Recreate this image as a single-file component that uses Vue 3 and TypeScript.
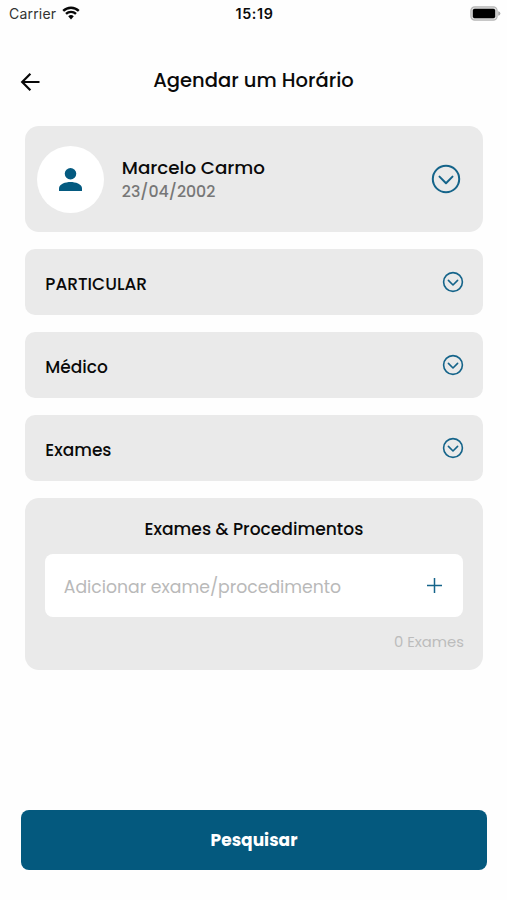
<script setup lang="ts">
interface Patient {
  name: string
  birthDate: string
}

interface SelectField {
  id: string
  label: string
}

const patient: Patient = { name: 'Marcelo Carmo', birthDate: '23/04/2002' }

const fields: SelectField[] = [
  { id: 'plan', label: 'PARTICULAR' },
  { id: 'doctor', label: 'Médico' },
  { id: 'exams', label: 'Exames' },
]

const exams: string[] = []
</script>

<template>
  <main class="screen">
    <div class="status">
      <div class="carrier">
        <span class="carrier-name">Carrier</span>
        <svg class="wifi" viewBox="0 0 18 14">
          <path d="M1.2 4.9a11.2 11.2 0 0 1 15.6 0M4 7.9a7.2 7.2 0 0 1 10 0" />
          <path class="wifi-dot" d="M6.2 10.3a4.1 4.1 0 0 1 5.6 0L9 13.4z" />
        </svg>
      </div>
      <span class="clock">15:19</span>
      <div class="power">
        <svg class="battery" viewBox="0 0 31 15">
          <rect class="battery-case" x="0.9" y="0.9" width="26.2" height="13.2" rx="3.8" />
          <rect x="2.8" y="2.8" width="22.4" height="9.4" rx="1.8" />
          <path class="battery-tip" d="M28.2 5.2q2.2.6 2.2 2.3t-2.2 2.3z" />
        </svg>
      </div>
    </div>

    <header class="header">
      <button class="back" type="button" aria-label="Voltar">
        <svg viewBox="0 0 20 20"><path d="M19.5 10H2.5M10.4 1.8 2.2 10l8.2 8.2" /></svg>
      </button>
      <h1 class="title">Agendar um Horário</h1>
    </header>

    <section class="content">
      <div class="card patient">
        <div class="avatar">
          <svg viewBox="0 0 24 24">
            <circle cx="12" cy="6" r="6" />
            <path d="M0 24v-3c0-4.3 7-6.4 12-6.4s12 2.1 12 6.4v3z" />
          </svg>
        </div>
        <div class="info">
          <span class="name">{{ patient.name }}</span>
          <span class="birth">{{ patient.birthDate }}</span>
        </div>
        <svg class="chevron chevron-large" viewBox="0 0 30 30">
          <circle cx="15" cy="15" r="13.2" />
          <path d="m8.5 12.6 6.5 6.7 6.5-6.7" />
        </svg>
      </div>

      <div v-for="field in fields" :key="field.id" class="card field">
        <span class="label">{{ field.label }}</span>
        <svg class="chevron" viewBox="0 0 22 22">
          <circle cx="11" cy="11" r="9.4" />
          <path d="m6.4 9.4 4.6 4.6 4.6-4.6" />
        </svg>
      </div>

      <div class="card exams">
        <h2 class="exams-title">Exames &amp; Procedimentos</h2>
        <div class="entry">
          <span class="placeholder">Adicionar exame/procedimento</span>
          <svg class="plus" viewBox="0 0 16 16"><path d="M8.5 1v15M1 8.5h15" /></svg>
        </div>
        <span class="count">{{ exams.length }} Exames</span>
      </div>
    </section>

    <button class="submit" type="button"><span class="submit-text">Pesquisar</span></button>
  </main>
</template>

<style>
body {
  background: #fff;
}
</style>

<style scoped>
.screen {
  box-sizing: border-box;
  height: 900px;
  display: flex;
  flex-direction: column;
  font-family: Poppins, Inter, sans-serif;
  font-weight: 500;
  color: #0a0a0a;
  background: #fefefe;
}
svg {
  display: block;
  flex: none;
}
button {
  border: 0;
  padding: 0;
  font: inherit;
}
.status {
  height: 28px;
  padding: 0 6px 0 8px;
  display: grid;
  grid-template-columns: 1fr auto 1fr;
  align-items: center;
  box-sizing: border-box;
  font-family: Inter, sans-serif;
  line-height: 28px;
}
.carrier {
  display: flex;
  align-items: center;
  gap: 6px;
}
.carrier-name {
  width: 48px;
  padding-left: 1px;
  box-sizing: border-box;
  font-size: 14px;
  font-weight: 400;
  letter-spacing: 0.2px;
  color: #333;
}
.wifi {
  width: 18px;
  height: 14px;
  margin-top: -3px;
  fill: none;
  stroke: #080808;
  stroke-width: 2.4;
}
.wifi .wifi-dot {
  fill: #080808;
  stroke: none;
}
.clock {
  font-size: 14.3px;
  font-weight: 600;
  letter-spacing: 0.6px;
}
.power {
  display: flex;
  justify-content: flex-end;
}
.battery {
  width: 31px;
  height: 15px;
  margin-top: -2px;
}
.battery-case {
  fill: #ddd;
  stroke: #b5b5b5;
  stroke-width: 1.2;
}
.battery-tip {
  fill: #aaa;
}
.header {
  height: 98px;
  padding: 9px 20px 0;
  display: grid;
  grid-template-columns: 20px 1fr 20px;
  align-items: center;
  box-sizing: border-box;
}
.back {
  width: 20px;
  height: 20px;
  background: none;
}
.back svg {
  width: 20px;
  height: 20px;
  fill: none;
  stroke: #080808;
  stroke-width: 2.2;
}
.title {
  margin: 0;
  padding-bottom: 2px;
  text-align: center;
  font-size: 19.5px;
  font-weight: 500;
  line-height: 28px;
  white-space: nowrap;
}
.content {
  padding: 0 24.5px 0 25.3px;
  display: flex;
  flex-direction: column;
  gap: 17.2px;
}
.card {
  box-sizing: border-box;
  background: #eaeaea;
  border-radius: 10px;
}
.patient {
  height: 106px;
  padding: 0 22px 0 12px;
  display: flex;
  align-items: center;
  border-radius: 14px;
}
.avatar {
  width: 67px;
  height: 67px;
  border-radius: 50%;
  background: #fff;
  display: flex;
  align-items: center;
  justify-content: center;
}
.avatar svg {
  width: 23px;
  height: 23px;
  fill: #045a80;
}
.info {
  flex: 1;
  margin-left: 17.5px;
  display: flex;
  flex-direction: column;
}
.name {
  font-size: 18.3px;
  line-height: 24px;
}
.birth {
  font-size: 15.8px;
  line-height: 23px;
  color: #777;
}
.chevron {
  width: 22px;
  height: 22px;
  fill: none;
  stroke: #15648a;
  stroke-width: 1.6;
  stroke-linecap: round;
  stroke-linejoin: round;
}
.chevron-large {
  width: 30px;
  height: 30px;
  stroke-width: 2;
}
.field {
  height: 65.8px;
  padding: 0 19px 1px 20px;
  display: flex;
  align-items: center;
  justify-content: space-between;
}
.label {
  padding-top: 4px;
  font-size: 17px;
  line-height: 24px;
}
.exams {
  height: 171.5px;
  padding: 18px 19.5px 0 19.5px;
  border-radius: 14px;
  display: flex;
  flex-direction: column;
}
.exams-title {
  margin: 0;
  text-align: center;
  font-size: 17.1px;
  font-weight: 500;
  line-height: 26px;
}
.entry {
  height: 63.5px;
  margin-top: 11.5px;
  padding: 0 21px 0 19px;
  box-sizing: border-box;
  border-radius: 8px;
  background: #fff;
  display: flex;
  align-items: center;
  justify-content: space-between;
}
.placeholder {
  padding-top: 3px;
  font-size: 17.25px;
  font-weight: 400;
  color: #b9b9b9;
  white-space: nowrap;
}
.plus {
  width: 16px;
  height: 16px;
  fill: none;
  stroke: #15648a;
  stroke-width: 1.5;
}
.count {
  margin: 12.5px -1px 0 0;
  align-self: flex-end;
  font-size: 14.8px;
  font-weight: 400;
  line-height: 24px;
  color: #bcbcbc;
}
.submit {
  height: 60px;
  margin: auto 20px 30px 21px;
  border-radius: 8px;
  background: #04597e;
  color: #fff;
}
.submit-text {
  font-size: 17px;
  font-weight: 700;
}
</style>
